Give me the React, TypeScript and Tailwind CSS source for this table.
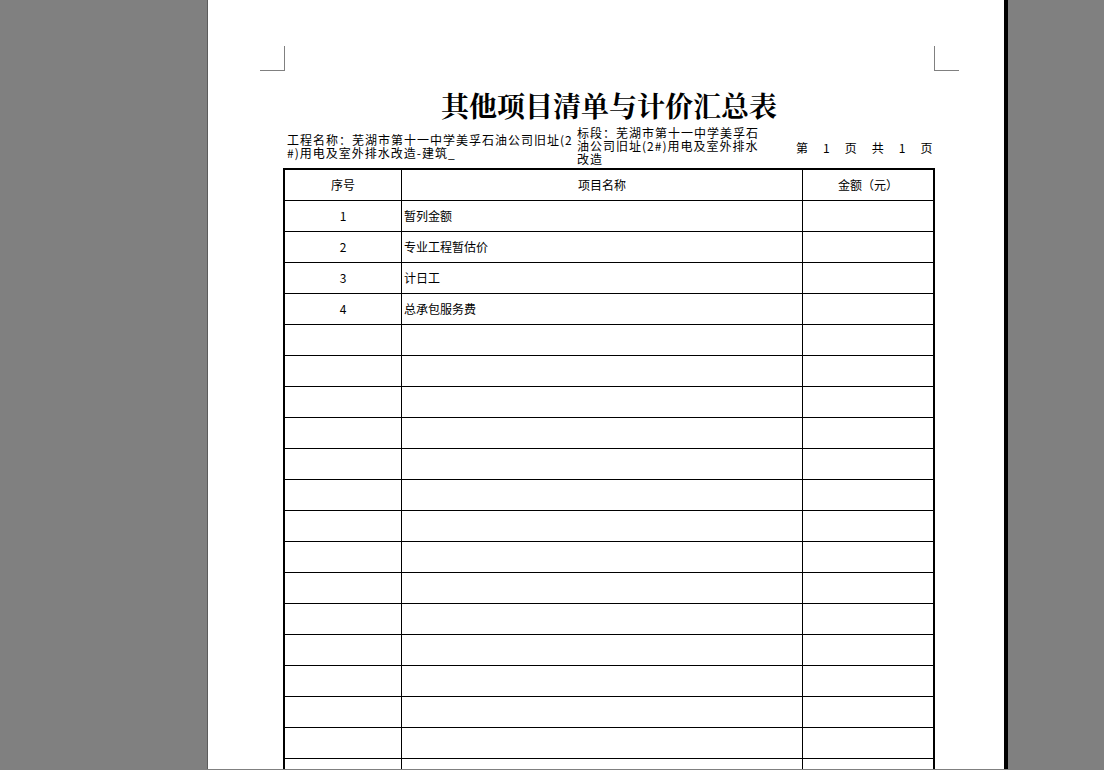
import React from "react";

const rows: { no: string; name: string }[] = [
  { no: "1", name: "暂列金额" },
  { no: "2", name: "专业工程暂估价" },
  { no: "3", name: "计日工" },
  { no: "4", name: "总承包服务费" },
];

const emptyCount = 16;

export default function App() {
  const allRows = [
    ...rows,
    ...Array.from({ length: emptyCount }, () => ({ no: "", name: "" })),
  ];
  return (
    <div
      className="w-[1104px] h-[770px] overflow-hidden bg-[#808080] text-black"
      style={{ fontFamily: '"Noto Sans CJK SC", "Liberation Sans", sans-serif' }}
    >
      <div className="flex h-[769px]">
        <div className="w-[207px] shrink-0 bg-[#808080]" />
        <div className="w-[1px] shrink-0 bg-[#5c5c5c]" />
        <div className="w-[796px] shrink-0 bg-white overflow-hidden pt-[46px]">
          {/* crop marks */}
          <div className="flex justify-between pl-[52px] pr-[45px]">
            <div className="w-[25px] h-[25px] border-r border-b border-[#808080]" />
            <div className="w-[25px] h-[25px] border-l border-b border-[#808080]" />
          </div>
          <div className="ml-[75px] w-[652px]">
            <div
              className="mt-[16px] h-[36px] flex items-center justify-center text-[28px] leading-[36px] font-bold"
              style={{ fontFamily: '"Noto Serif CJK SC", "Noto Sans CJK SC", serif' }}
            >
              其他项目清单与计价汇总表
            </div>
            <div className="flex items-center h-[45px] text-[12px] leading-[13px] tracking-[1px]">
              <div className="w-[294px] pl-[4px] shrink-0">
                <div className="whitespace-nowrap">工程名称：芜湖市第十一中学美孚石油公司旧址(2</div>
                <div className="whitespace-nowrap">#)用电及室外排水改造-建筑_</div>
              </div>
              <div className="w-[219px] shrink-0">
                <div className="whitespace-nowrap">标段：芜湖市第十一中学美孚石</div>
                <div className="whitespace-nowrap">油公司旧址(2#)用电及室外排水</div>
                <div className="whitespace-nowrap">改造</div>
              </div>
              <div className="flex gap-[15px] pt-[3px] whitespace-nowrap tracking-normal">
                <span>第</span>
                <span>1</span>
                <span>页</span>
                <span>共</span>
                <span>1</span>
                <span>页</span>
              </div>
            </div>
            <div className="border-l-2 border-r-2 border-t-2 border-black text-[12px]">
              <div className="flex h-[31px] border-b border-black">
                <div className="w-[117px] shrink-0 border-r border-black flex items-center justify-center">序号</div>
                <div className="w-[401px] shrink-0 border-r border-black flex items-center justify-center">项目名称</div>
                <div className="flex-1 flex items-center justify-center">金额（元）</div>
              </div>
              {allRows.map((r, i) => (
                <div key={i} className="flex h-[31px] border-b border-black">
                  <div className="w-[117px] shrink-0 border-r border-black flex items-center justify-center">{r.no}</div>
                  <div className="w-[401px] shrink-0 border-r border-black flex items-center pl-[2px]">{r.name}</div>
                  <div className="flex-1" />
                </div>
              ))}
            </div>
          </div>
        </div>
        <div className="w-[4px] shrink-0 bg-black" />
        <div className="flex-1 bg-[#808080]" />
      </div>
      <div className="h-[1px] bg-[#808080]" />
    </div>
  );
}
